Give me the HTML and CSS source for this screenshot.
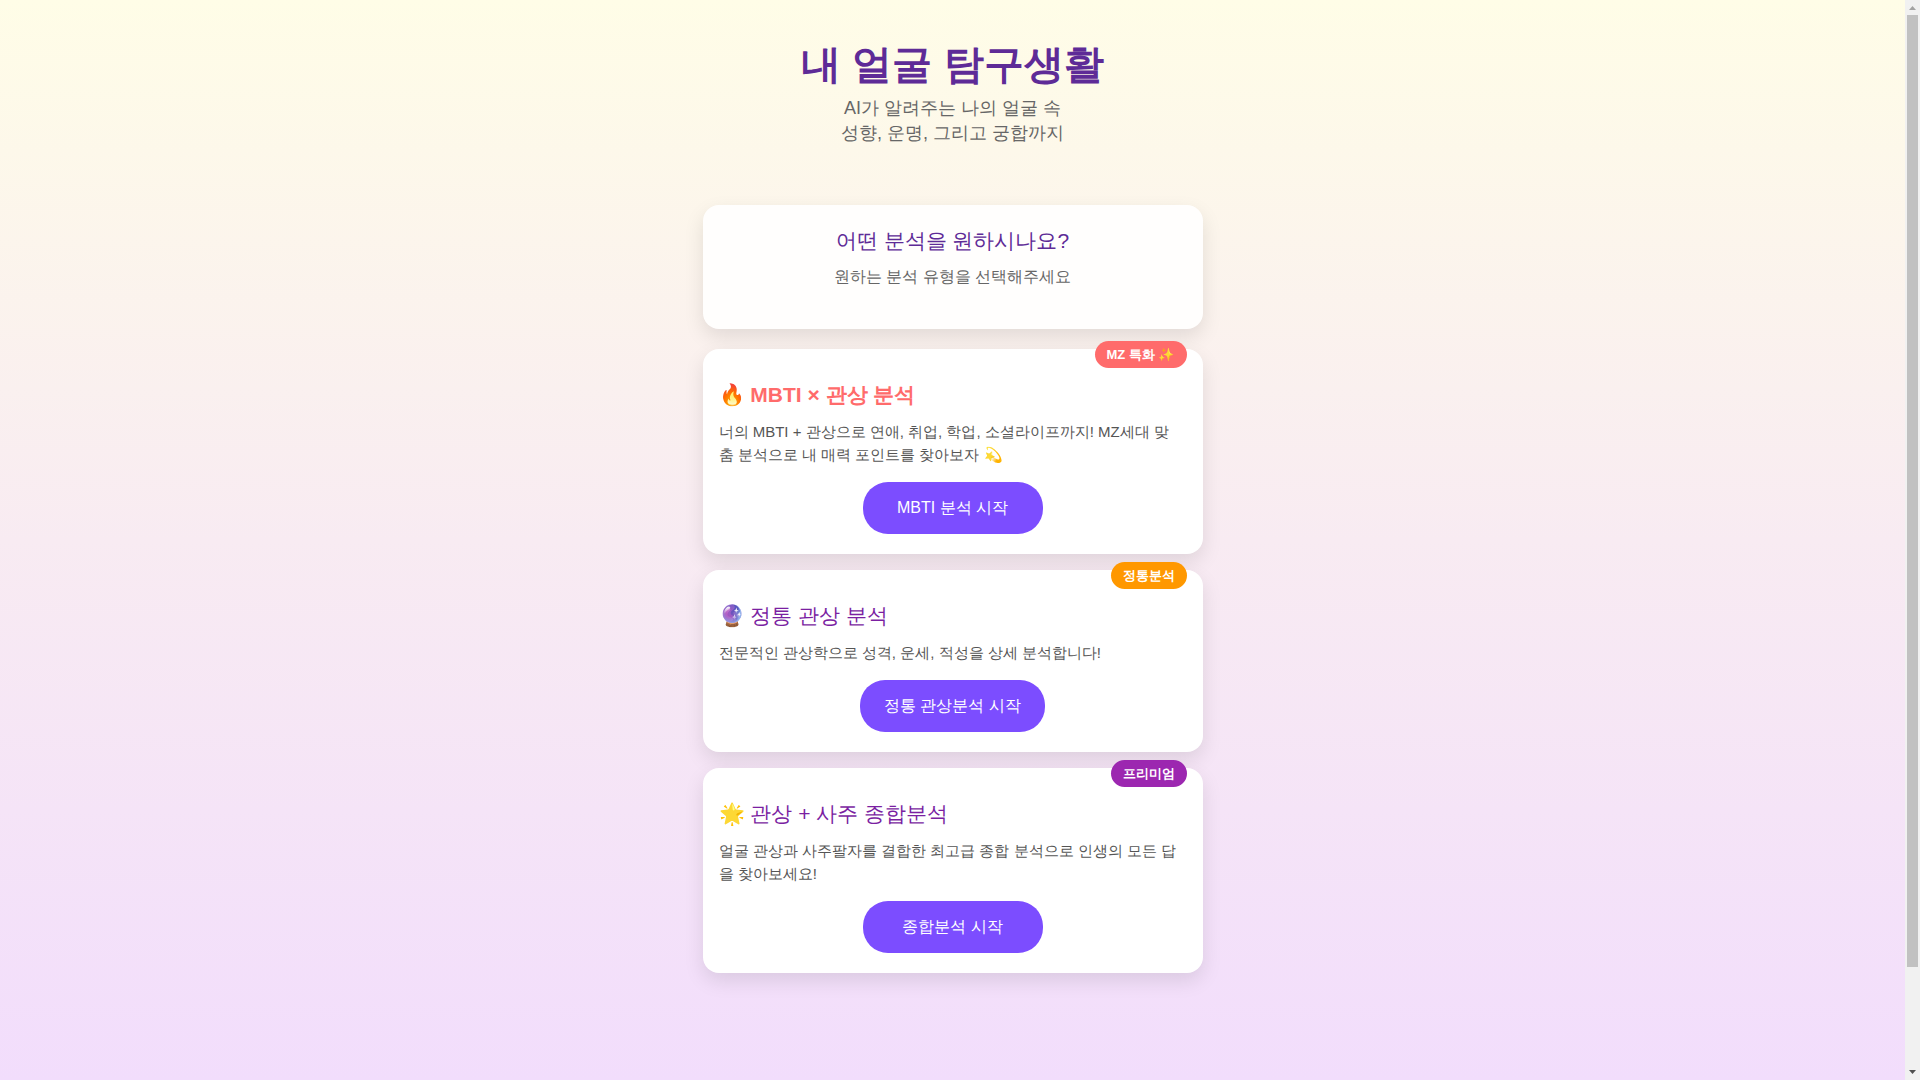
FILE: index.html
```html
<!DOCTYPE html>
<html lang="ko">
<head>
<meta charset="utf-8">
<meta name="viewport" content="width=device-width, initial-scale=1">
<title>내 얼굴 탐구생활</title>
<link rel="stylesheet" href="styles.css">
</head>
<body>
<div class="page">
  <header class="hero">
    <h1 class="hero-title">내 얼굴 탐구생활</h1>
    <p class="hero-text">AI가 알려주는 나의 얼굴 속<br>성향, 운명, 그리고 궁합까지</p>
  </header>
  <main class="content">
    <section class="card intro">
      <h2 class="intro-title">어떤 분석을 원하시나요?</h2>
      <p class="intro-text">원하는 분석 유형을 선택해주세요</p>
    </section>
    <section class="card option">
      <span class="badge badge-mz">MZ 특화 ✨</span>
      <h3 class="option-title option-title-mz">🔥 MBTI × 관상 분석</h3>
      <p class="option-text">너의 MBTI + 관상으로 연애, 취업, 학업, 소셜라이프까지! MZ세대 맞춤 분석으로 내 매력 포인트를 찾아보자 💫</p>
      <button class="start" type="button">MBTI 분석 시작</button>
    </section>
    <section class="card option">
      <span class="badge badge-classic">정통분석</span>
      <h3 class="option-title">🔮 정통 관상 분석</h3>
      <p class="option-text">전문적인 관상학으로 성격, 운세, 적성을 상세 분석합니다!</p>
      <button class="start" type="button">정통 관상분석 시작</button>
    </section>
    <section class="card option">
      <span class="badge badge-premium">프리미엄</span>
      <h3 class="option-title">🌟 관상 + 사주 종합분석</h3>
      <p class="option-text">얼굴 관상과 사주팔자를 결합한 최고급 종합 분석으로 인생의 모든 답을 찾아보세요!</p>
      <button class="start" type="button">종합분석 시작</button>
    </section>
  </main>
</div>
<div class="scrollbar" aria-hidden="true">
  <svg class="scroll-arrow" viewBox="0 0 15 15"><path d="M4 10h7L7.500 6z" fill="#a3a3a3"/></svg>
  <div class="scroll-track"><div class="scroll-thumb"></div></div>
  <svg class="scroll-arrow" viewBox="0 0 15 15"><path d="M4 5h7L7.500 9z" fill="#505050"/></svg>
</div>
</body>
</html>
```
FILE: styles.css
```css
* {
  box-sizing: border-box;
  margin: 0;
  padding: 0;
}

body {
  display: flex;
  height: 100vh;
  overflow: hidden;
  font-family: "Liberation Sans", sans-serif;
  color: #555;
}

.page {
  flex: 1;
  min-width: 0;
  overflow: hidden;
  padding: 36px 16px;
  background: linear-gradient(to bottom, #fffde7, #f8ebf2 50%, #f2ddfc);
}

.hero {
  margin-bottom: 59px;
  text-align: center;
}

.hero-title {
  margin-bottom: 4px;
  font-size: 40px;
  line-height: 56px;
  color: #5e2b97;
}

.hero-text {
  font-size: 18px;
  line-height: 25px;
  color: #666;
}

.content {
  display: flex;
  flex-direction: column;
  gap: 16px;
  max-width: 500px;
  margin: 0 auto;
}

.card {
  border-radius: 16px;
  background: #fff;
  box-shadow: 0 8px 20px rgba(0, 0, 0, 0.1);
}

.intro {
  margin-bottom: 4px;
  padding: 20px 16px 40px;
  background: #fffefd;
  text-align: center;
}

.intro-title {
  margin-bottom: 8px;
  font-size: 21px;
  font-weight: 400;
  line-height: 32px;
  color: #5e2b97;
}

.intro-text {
  font-size: 16px;
  line-height: 24px;
  color: #666;
}

.option {
  position: relative;
  display: flex;
  flex-direction: column;
  align-items: center;
  padding: 28px 16px 20px;
}

.option-title {
  align-self: stretch;
  margin-bottom: 8px;
  font-size: 21px;
  font-weight: 400;
  line-height: 35px;
  color: #7b1fa2;
}

.option-title-mz {
  font-weight: 700;
  color: #ff6b6b;
}

.option-text {
  align-self: stretch;
  margin-bottom: 16px;
  padding-right: 8px;
  font-size: 15px;
  line-height: 23px;
}

.badge {
  position: absolute;
  top: -8px;
  right: 16px;
  padding: 5px 12px;
  border-radius: 15px;
  font-size: 13px;
  font-weight: 700;
  line-height: 17px;
  color: #fff;
}

.badge-mz { background: #ff6b6b; }
.badge-classic { background: #ff9800; }
.badge-premium { background: #9c27b0; }

.start {
  min-width: 180px;
  padding: 14px 24px;
  border: 0;
  border-radius: 25px;
  background: #7c4dff;
  font-family: inherit;
  font-size: 16px;
  line-height: 24px;
  color: #fff;
}

.scrollbar {
  display: flex;
  flex-direction: column;
  width: 15px;
  background: #f1f1f1;
}

.scroll-arrow {
  width: 15px;
  height: 15px;
}

.scroll-track {
  display: grid;
  flex: 1;
  grid-template-rows: 68fr 7fr;
  padding: 0 2px;
}

.scroll-thumb {
  background: #c1c1c1;
}
```
